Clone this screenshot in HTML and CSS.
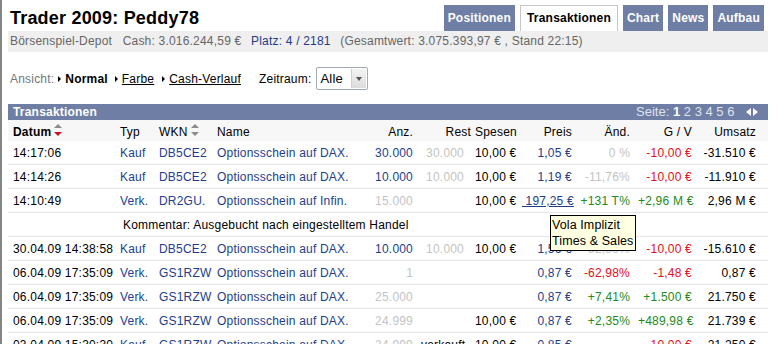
FILE: index.html
```html
<!DOCTYPE html>
<html lang="de">
<head>
  <meta charset="UTF-8">
  <title>Trader 2009: Peddy78 - Transaktionen</title>
  <link rel="stylesheet" href="styles.css">
</head>
<body>
  <div class="page">
    <div class="head">
      <h1>Trader 2009: Peddy78</h1>
      <ul class="tabs">
        <li>Positionen</li>
        <li class="active">Transaktionen</li>
        <li>Chart</li>
        <li>News</li>
        <li>Aufbau</li>
      </ul>
    </div>

    <div class="info">
      <span>Börsenspiel-Depot</span>
      <span class="cash">Cash: 3.016.244,59 €</span>
      <span class="platz">Platz: 4 / 2181</span>
      <span class="total">(Gesamtwert: 3.075.393,97 € , Stand 22:15)</span>
    </div>

    <div class="view">
      <span>Ansicht:</span>
      <span class="opt current">Normal</span>
      <a class="opt" href="#">Farbe</a>
      <a class="opt" href="#">Cash-Verlauf</a>
      <span class="range">Zeitraum:</span>
      <div class="select">
        <span class="value">Alle</span>
        <span class="drop"></span>
      </div>
    </div>

    <div class="bar">
      <span class="bar-title">Transaktionen</span>
      <span class="pages">Seite: <b>1</b> 2 3 4 5 6 <span class="arrows"><i class="prev"></i><i class="next"></i></span></span>
    </div>

    <table class="tx">
      <colgroup>
        <col style="width:108px"><col style="width:39px"><col style="width:58px"><col style="width:142px">
        <col style="width:62px"><col style="width:54px"><col style="width:47px"><col style="width:58px">
        <col style="width:58px"><col style="width:62px"><col style="width:72px">
      </colgroup>
      <thead>
        <tr>
          <th class="date"><b>Datum</b><span class="sort"><i class="up"></i><i class="down active"></i></span></th>
          <th>Typ</th>
          <th>WKN<span class="sort"><i class="up"></i><i class="down"></i></span></th>
          <th>Name</th>
          <th class="num">Anz.</th>
          <th class="num rest">Rest</th>
          <th class="num">Spesen</th>
          <th class="num">Preis</th>
          <th class="num">Änd.</th>
          <th class="num">G / V</th>
          <th class="num last">Umsatz</th>
        </tr>
      </thead>
      <tbody>
        <tr>
          <td class="date">14:17:06</td><td class="link">Kauf</td><td class="link">DB5CE2</td><td class="link">Optionsschein auf DAX.</td>
          <td class="num link">30.000</td><td class="num rest muted">30.000</td><td class="num">10,00 €</td><td class="num link">1,05 €</td>
          <td class="num muted">0 %</td><td class="num neg">-10,00 €</td><td class="num last">-31.510 €</td>
        </tr>
        <tr>
          <td class="date">14:14:26</td><td class="link">Kauf</td><td class="link">DB5CE2</td><td class="link">Optionsschein auf DAX.</td>
          <td class="num link">10.000</td><td class="num rest muted">10.000</td><td class="num">10,00 €</td><td class="num link">1,19 €</td>
          <td class="num muted">-11,76%</td><td class="num neg">-10,00 €</td><td class="num last">-11.910 €</td>
        </tr>
        <tr>
          <td class="date">14:10:49</td><td class="link">Verk.</td><td class="link">DR2GU.</td><td class="link">Optionsschein auf Infin.</td>
          <td class="num muted">15.000</td><td class="num rest"></td><td class="num">10,00 €</td><td class="num"><a class="price" href="#">&nbsp;197,25 €</a></td>
          <td class="num pos">+131 T%</td><td class="num pos">+2,96 M €</td><td class="num last">2,96 M €</td>
        </tr>
        <tr>
          <td></td><td class="comment" colspan="10">Kommentar: Ausgebucht nach eingestelltem Handel</td>
        </tr>
        <tr>
          <td class="date">30.04.09 14:38:58</td><td class="link">Kauf</td><td class="link">DB5CE2</td><td class="link">Optionsschein auf DAX.</td>
          <td class="num link">10.000</td><td class="num rest muted">10.000</td><td class="num">10,00 €</td><td class="num link">1,56 €</td>
          <td class="num muted">-52,39%</td><td class="num neg">-10,00 €</td><td class="num last">-15.610 €</td>
        </tr>
        <tr>
          <td class="date">06.04.09 17:35:09</td><td class="link">Verk.</td><td class="link">GS1RZW</td><td class="link">Optionsschein auf DAX.</td>
          <td class="num muted">1</td><td class="num rest"></td><td class="num"></td><td class="num link">0,87 €</td>
          <td class="num neg">-62,98%</td><td class="num neg">-1,48 €</td><td class="num last">0,87 €</td>
        </tr>
        <tr>
          <td class="date">06.04.09 17:35:09</td><td class="link">Verk.</td><td class="link">GS1RZW</td><td class="link">Optionsschein auf DAX.</td>
          <td class="num muted">25.000</td><td class="num rest"></td><td class="num"></td><td class="num link">0,87 €</td>
          <td class="num pos">+7,41%</td><td class="num pos">+1.500 €</td><td class="num last">21.750 €</td>
        </tr>
        <tr>
          <td class="date">06.04.09 17:35:09</td><td class="link">Verk.</td><td class="link">GS1RZW</td><td class="link">Optionsschein auf DAX.</td>
          <td class="num muted">24.999</td><td class="num rest"></td><td class="num">10,00 €</td><td class="num link">0,87 €</td>
          <td class="num pos">+2,35%</td><td class="num pos">+489,98 €</td><td class="num last">21.739 €</td>
        </tr>
        <tr>
          <td class="date">03.04.09 15:30:30</td><td class="link">Kauf</td><td class="link">GS1RZW</td><td class="link">Optionsschein auf DAX.</td>
          <td class="num muted">24.999</td><td class="num rest">verkauft</td><td class="num">10,00 €</td><td class="num link">0,85 €</td>
          <td class="num"></td><td class="num neg">-10,00 €</td><td class="num last">21.250 €</td>
        </tr>
      </tbody>
    </table>

    <!-- Hover-Menü über dem Preis -->
    <div class="tooltip">
      <div>Vola Implizit</div>
      <div>Times &amp; Sales</div>
    </div>
  </div>
</body>
</html>
```

FILE: styles.css
```css
html {
  height: 100%;
}

body {
  margin: 0;
  min-height: 100%;
  box-sizing: border-box;
  border-left: 2px solid #858585;
  font-family: Arial, "Liberation Sans", sans-serif;
  font-size: 12px;
  letter-spacing: 0.2px;
  color: #000;
  background-color: #fff;
}

.page {
  position: relative;
  width: 760px;
  margin-left: 6px;
}

/* Kopf mit Titel und Reitern */
.head {
  display: flex;
  justify-content: space-between;
  align-items: flex-end;
  height: 31px;
}

h1 {
  margin: 0 0 2px 2px;
  font-size: 18px;
  line-height: 22px;
}

.tabs {
  display: flex;
  gap: 5px;
  margin: 0 4px 0 0;
  padding: 0;
  list-style: none;
}

.tabs li {
  padding: 0 4px;
  line-height: 26px;
  background-color: #6e7ea4;
  color: #fff;
  font-weight: bold;
}

.tabs li.active {
  padding: 0 6px;
  line-height: 25px;
  background-color: #fff;
  color: #000;
  border: 1px solid #c6c6c6;
  border-bottom: none;
}

.info {
  height: 21px;
  padding-left: 2px;
  line-height: 21px;
  background-color: #efefef;
  color: #666;
}

.info .cash {
  margin-left: 7px;
}

.info .platz {
  margin-left: 6px;
  color: #1f3a87;
}

.info .total {
  margin-left: 6px;
}

/* Ansicht / Zeitraum */
.view {
  display: flex;
  align-items: center;
  height: 23px;
  margin-top: 15px;
  padding-left: 2px;
  color: #777;
}

.view .opt {
  margin-left: 4px;
  color: #000;
}

.view .opt::before {
  content: "";
  display: inline-block;
  margin: 0 4px 1px 0;
  border-left: 3px solid #000;
  border-top: 3px solid transparent;
  border-bottom: 3px solid transparent;
}

.view .current {
  font-weight: bold;
  margin-right: 3px;
}

.view a.opt {
  margin-right: 4px;
}

.view .range {
  margin-left: 14px;
  color: #000;
}

.select {
  display: flex;
  width: 52px;
  height: 23px;
  margin-left: 5px;
  box-sizing: border-box;
  border: 1px solid #a3aab4;
  border-radius: 2px;
  background-color: #fff;
}

.select .value {
  flex: 1;
  padding-left: 3px;
  font-size: 13px;
  line-height: 21px;
  color: #000;
}

.select .drop {
  position: relative;
  width: 14px;
  margin: 1px;
  background: linear-gradient(#f4f4f4, #dcdcdc);
  border-left: 1px solid #d0d0d0;
}

.select .drop::after {
  content: "";
  position: absolute;
  left: 4px;
  top: 8px;
  border-top: 4px solid #555;
  border-left: 3px solid transparent;
  border-right: 3px solid transparent;
}

/* Tabelle */
.bar {
  display: flex;
  justify-content: space-between;
  height: 16px;
  margin-top: 14px;
  padding: 0 10px 0 5px;
  line-height: 16px;
  background-color: #6e7ea4;
  color: #fff;
}

.bar-title {
  font-weight: bold;
}

.pages {
  font-size: 13px;
  letter-spacing: 0;
  color: #dfe3ee;
}

.pages b {
  color: #fff;
}

.arrows {
  display: inline-flex;
  gap: 2px;
  margin-left: 8px;
}

.arrows i {
  display: inline-block;
  border-top: 4px solid transparent;
  border-bottom: 4px solid transparent;
}

.arrows .prev {
  border-right: 5px solid #fff;
}

.arrows .next {
  border-left: 5px solid #fff;
}

.tx {
  width: 760px;
  border-collapse: collapse;
  table-layout: fixed;
}

.tx th {
  height: 18px;
  padding: 3px 4px 0;
  background-color: #f7f7f8;
  font-weight: normal;
  text-align: left;
  white-space: nowrap;
}

.tx td {
  height: 23px;
  padding: 0 4px;
  border-bottom: 1px solid #e6e6e6;
  white-space: nowrap;
}

.tx .date {
  padding-left: 5px;
}

.tx .num {
  text-align: right;
}

.tx td.rest {
  padding-right: 7px;
}

.tx th.rest {
  padding-right: 0;
}

.tx .last {
  padding-right: 12px;
}

.tx .comment {
  padding-left: 7px;
}

/* Sortierpfeile */
.sort {
  display: inline-block;
  position: relative;
  width: 8px;
  height: 10px;
  margin-left: 3px;
}

.sort i {
  position: absolute;
  left: 0;
  border-left: 4px solid transparent;
  border-right: 4px solid transparent;
}

.sort .up {
  top: -2px;
  border-bottom: 4px solid #8c8c8c;
}

.sort .down {
  top: 6px;
  border-top: 4px solid #8c8c8c;
}

.sort .down.active {
  border-top-color: #cc1122;
}

.link {
  color: #233e8b;
}

.muted {
  color: #c4c4c4;
}

.neg {
  color: #e0101c;
}

.pos {
  color: #238a23;
}

.price {
  color: #233e8b;
}

.tooltip {
  position: absolute;
  left: 542px;
  top: 215px;
  padding: 1px 2px 1px 1px;
  font-size: 12.5px;
  letter-spacing: 0.1px;
  line-height: 16px;
  white-space: nowrap;
  background-color: #ffffe1;
  border: 1px solid #000;
}
```
